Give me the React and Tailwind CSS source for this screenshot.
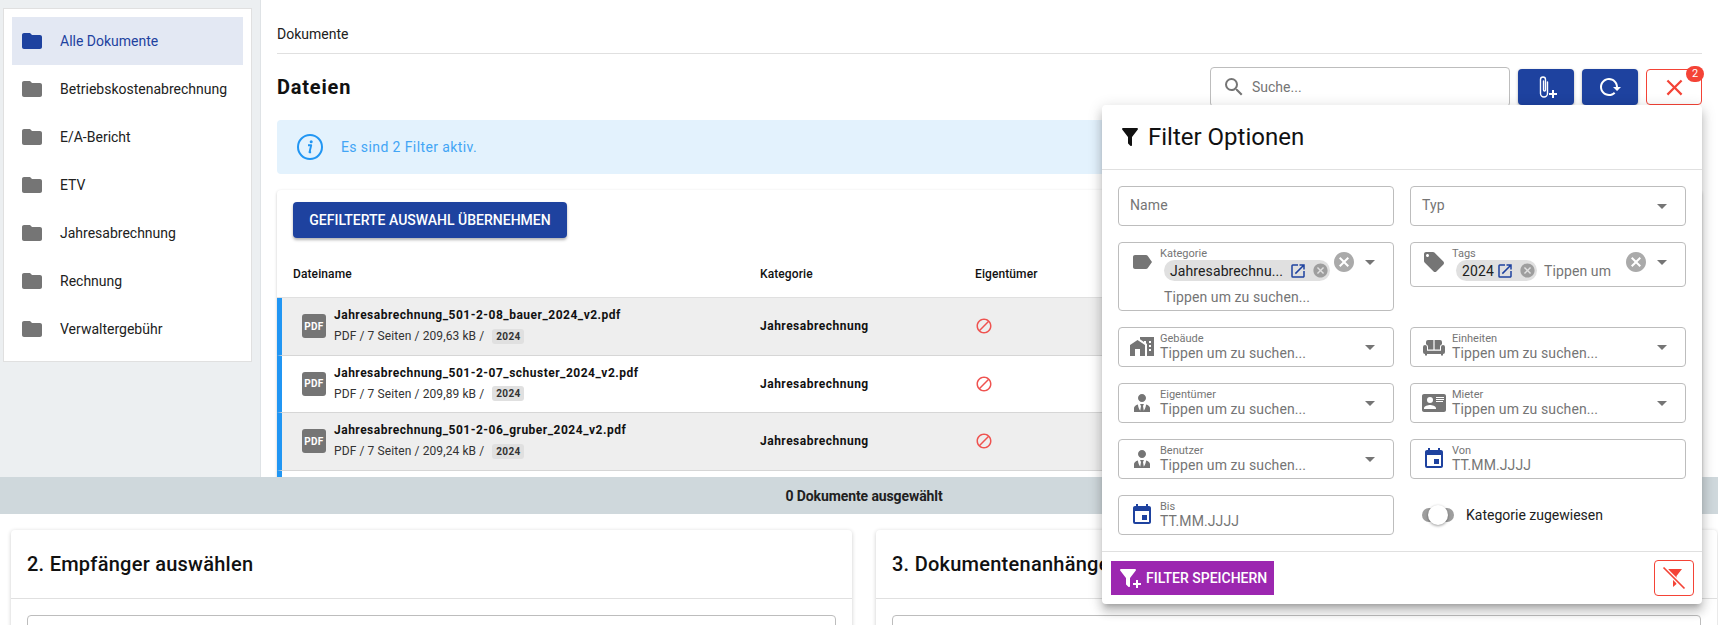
import React from "react";
import {
  MdFolder, MdSearch, MdClose, MdBlock, MdCancel, MdArrowDropDown, MdLabel, MdLocalOffer,
  MdEvent, MdOpenInNew,
} from "react-icons/md";

const P = ({ d, size = 24, className = "" }) => (
  <svg width={size} height={size} viewBox="0 0 24 24" fill="currentColor" className={`shrink-0 ${className}`}>
    <path d={d} />
  </svg>
);

const HOME_CITY = "M0,21V10L7.5,5L15,10V21H10V14H5V21H0M24,2V21H17V8.93L16,8.27V6H14V6.93L10,4.27V2H24M21,14H19V16H21V14M21,10H19V12H21V10M21,6H19V8H21V6Z";
const ACCOUNT_TIE = "M12 3C14.21 3 16 4.79 16 7S14.21 11 12 11 8 9.21 8 7 9.79 3 12 3M16 13.54C16 14.6 15.72 17.07 13.81 19.83L13 15L13.94 13.12C13.32 13.05 12.67 13 12 13S10.68 13.05 10.06 13.12L11 15L10.19 19.83C8.28 17.07 8 14.6 8 13.54C5.61 14.24 4 15.5 4 17V21H20V17C20 15.5 18.4 14.24 16 13.54Z";
const CARD_DETAILS = "M2,3H22C23.05,3 24,3.95 24,5V19C24,20.05 23.05,21 22,21H2C0.95,21 0,20.05 0,19V5C0,3.95 0.95,3 2,3M14,6V7H22V6H14M14,8V9H21.5L22,9V8H14M14,10V11H21V10H14M8,13.91C6,13.91 2,15 2,17V18H14V17C14,15 10,13.91 8,13.91M8,6A3,3 0 0,0 5,9A3,3 0 0,0 8,12A3,3 0 0,0 11,9A3,3 0 0,0 8,6Z";
const RELOAD = "M2 12C2 16.97 6.03 21 11 21C13.39 21 15.68 20.06 17.4 18.4L15.9 16.9C14.63 18.25 12.86 19 11 19C4.76 19 1.64 11.46 6.05 7.05C10.46 2.64 18 5.77 18 12H15L19 16H19.1L23 12H20C20 7.03 15.97 3 11 3C6.03 3 2 7.03 2 12Z";
const FILTER = "M14,12V19.88C14.04,20.18 13.94,20.5 13.71,20.71C13.32,21.1 12.69,21.1 12.3,20.71L10.29,18.7C10.06,18.47 9.96,18.16 10,17.87V12H9.97L4.21,4.62C3.87,4.19 3.95,3.56 4.38,3.22C4.57,3.08 4.78,3 5,3V3H19V3C19.22,3 19.43,3.08 19.62,3.22C20.05,3.56 20.13,4.19 19.79,4.62L14.03,12H14Z";
const FILTER_PLUS = "M12 12V19.88C12.04 20.18 11.94 20.5 11.72 20.71C11.32 21.1 10.69 21.1 10.3 20.71L8.29 18.7C8.06 18.47 7.96 18.16 8 17.88V12H7.97L2.21 4.62C1.87 4.19 1.95 3.56 2.38 3.22C2.57 3.08 2.78 3 3 3H17C17.22 3 17.43 3.08 17.62 3.22C18.05 3.56 18.13 4.19 17.79 4.62L12.03 12H12M15 17H18V14H20V17H23V19H20V22H18V19H15V17Z";
const SOFA = "M4 7a2 2 0 0 1 2-2h5.4v9.5H6V12c0-1.3-.8-2.4-2-2.8zM20 7a2 2 0 0 0-2-2h-5.4v9.5H18V12c0-1.3.8-2.4 2-2.8zM1 12a2 2 0 0 1 4 0v3.7h14V12a2 2 0 0 1 4 0v5a2 2 0 0 1-2 2v1.5h-2V19H5v1.5H3V19a2 2 0 0 1-2-2z";

const folders = ["Alle Dokumente", "Betriebskostenabrechnung", "E/A-Bericht", "ETV", "Jahresabrechnung", "Rechnung", "Verwaltergebühr"];
const files = [
  { name: "Jahresabrechnung_501-2-08_bauer_2024_v2.pdf", size: "209,63 kB", grey: true },
  { name: "Jahresabrechnung_501-2-07_schuster_2024_v2.pdf", size: "209,89 kB", grey: false },
  { name: "Jahresabrechnung_501-2-06_gruber_2024_v2.pdf", size: "209,24 kB", grey: true },
];

const Chevron = () => <MdArrowDropDown size={24} className="shrink-0 text-[#757575]" />;

function Field({ icon, label, value = "Tippen um zu suchen...", chevron = true }) {
  return (
    <div className="flex h-10 items-center rounded border border-[#bdbdbd] bg-white pl-[11px] pr-[11px]">
      <div className="flex w-6 shrink-0 justify-center text-[#757575]">{icon}</div>
      <div className="ml-1.5 flex-1">
        <div className="text-[11px] leading-[13px] text-[#757575]">{label}</div>
        <div className="text-sm leading-4 tracking-[0.1px] text-[#757575]">{value}</div>
      </div>
      {chevron && <Chevron />}
    </div>
  );
}

function Chip({ text, widthClass }) {
  return (
    <div className={`ml-1 flex h-[21px] items-center rounded-full bg-[#e0e0e0] pl-1.5 pr-[1.5px] ${widthClass}`}>
      <span className="flex-1 whitespace-nowrap text-sm leading-4 tracking-[0.1px] text-[#212121]">{text}</span>
      <MdOpenInNew size={18} className="shrink-0 text-[#1e429f]" />
      <MdCancel size={17} className="ml-[4.5px] shrink-0 text-[#9e9e9e]" />
    </div>
  );
}

function FileRow({ file }) {
  return (
    <div className={`flex h-[57.6px] items-center border-b border-l-[5px] border-b-[#d6d6d6] border-l-[#2196f3] ${file.grey ? "bg-[#eeeeee]" : "bg-white"}`}>
      <div className="flex w-[478px] shrink-0 items-center pl-5">
        <div className="flex h-6 w-6 shrink-0 items-center justify-center rounded-[3px] bg-[#757575] text-[10px] font-bold tracking-[0.3px] text-white">PDF</div>
        <div className="ml-2 -mt-0.5">
          <div className="text-xs font-bold leading-[18px] tracking-[0.5px] text-[#111]">{file.name}</div>
          <div className="mt-1 flex items-center text-xs leading-4 tracking-[0.1px] text-[#333]">
            <span>PDF / 7 Seiten / {file.size} /</span>
            <span className="ml-2 rounded-[3px] bg-[#e0e0e0] px-1 text-[10px] font-bold leading-[15px] tracking-[0.3px] text-[#333]">2024</span>
          </div>
        </div>
      </div>
      <div className="w-[215px] shrink-0 text-xs font-bold tracking-[0.5px] text-[#111]">Jahresabrechnung</div>
      <MdBlock size={18} className="text-[#ef5350]" />
    </div>
  );
}

function BottomCard({ title }) {
  return (
    <div className="h-[200px] flex-1 rounded bg-white shadow-[0_1px_4px_rgba(0,0,0,0.2)]">
      <div className="flex h-[69px] items-center border-b border-[#e0e0e0] px-4 text-xl font-medium tracking-[0.25px] text-[#111]">{title}</div>
      <div className="p-4">
        <div className="h-14 rounded border border-[#bdbdbd]" />
      </div>
    </div>
  );
}

export default function App() {
  return (
    <div className="relative h-[625px] w-[1718px] overflow-hidden bg-white [font-family:Roboto,sans-serif]">
      <div className="flex h-[477px]">
        <aside className="w-[261px] shrink-0 border-r border-[#dfe3e6] bg-[#eceff1] pl-[3px] pt-2">
          <div className="w-[249px] border border-[#e0e0e0] bg-white p-2">
            {folders.map((f, i) => (
              <div key={f} className={`flex h-12 items-center pl-2 ${i === 0 ? "bg-[#e3e8f3] text-[#1e429f]" : "text-[#212121]"}`}>
                <MdFolder size={24} className={i === 0 ? "text-[#1e429f]" : "text-[#757575]"} />
                <span className="ml-[16px] text-sm">{f}</span>
              </div>
            ))}
          </div>
        </aside>

        <main className="min-w-0 flex-1 overflow-hidden bg-white px-4">
          <div className="h-[54px] border-b border-[#e0e0e0] pt-[25px] text-sm leading-[18px] text-[#212121]">Dokumente</div>
          <div className="mt-[13px] flex h-10 items-center justify-between">
            <h1 className="text-xl font-bold tracking-[0.8px] text-[#111]">Dateien</h1>
            <div className="flex items-center gap-2">
              <div className="flex h-10 w-[300px] items-center rounded border border-[#bdbdbd] pl-[11px] text-sm text-[#757575]">
                <MdSearch size={24} className="text-[#757575]" />
                <span className="ml-[6px]">Suche...</span>
              </div>
              <button className="flex h-9 w-14 items-center justify-center rounded bg-[#1e429f] text-white shadow-[0_1px_3px_rgba(0,0,0,0.3)]">
                <svg width="24" height="24" viewBox="0 0 24 24" fill="none" stroke="currentColor" strokeWidth="1.4" strokeLinecap="round">
                  <path d="M13.5 7V18.5a3.5 3.5 0 0 1-7 0V4.5a2.5 2.5 0 0 1 5 0V15a1 1 0 0 1-2 0V6" />
                  <path d="M19 15v8M15 19h8" strokeWidth="2" strokeLinecap="butt" />
                </svg>
              </button>
              <button className="flex h-9 w-14 items-center justify-center rounded bg-[#1e429f] text-white shadow-[0_1px_3px_rgba(0,0,0,0.3)]">
                <P d={RELOAD} />
              </button>
              <button className="relative flex h-9 w-14 items-center justify-center rounded border border-[#f44336] text-[#f44336]">
                <MdClose size={27} />
                <span className="absolute -top-[4px] -right-[3px] flex h-4 w-[18px] items-center justify-center rounded-full bg-[#f44336] text-[11px] text-white">2</span>
              </button>
            </div>
          </div>

          <div className="mt-[13px] flex h-[54px] items-center rounded bg-[#e3f2fd] pl-5 text-[#2196f3]">
            <svg width="26" height="26" viewBox="0 0 26 26" fill="none" className="shrink-0">
              <circle cx="13" cy="13" r="12" stroke="currentColor" strokeWidth="2" />
              <circle cx="14.2" cy="7.7" r="1.5" fill="currentColor" />
              <path d="M11 11.3h3.2l-1.7 7h1.6" stroke="currentColor" strokeWidth="1.9" strokeLinejoin="round" />
            </svg>
            <span className="ml-[18px] text-sm tracking-[0.4px] text-[#42a5f5]">Es sind 2 Filter aktiv.</span>
          </div>

          <div className="mt-4 rounded bg-white shadow-[0_1px_3px_rgba(0,0,0,0.22)]">
            <div className="px-4 pt-3">
              <button className="flex h-9 w-[274px] items-center justify-center rounded bg-[#1e429f] text-sm font-medium text-white shadow-[0_2px_3px_rgba(0,0,0,0.3)]">GEFILTERTE AUSWAHL ÜBERNEHMEN</button>
            </div>
            <div className="flex h-[60px] items-center border-b border-[#e0e0e0] pl-4 pt-[12px] text-xs font-medium tracking-[0.1px] text-[#111]">
              <div className="w-[467px] shrink-0">Dateiname</div>
              <div className="w-[215px] shrink-0">Kategorie</div>
              <div>Eigentümer</div>
            </div>
            {files.map((f) => <FileRow key={f.name} file={f} />)}
            <div className="h-[20px] border-l-[5px] border-l-[#2196f3] bg-white" />
          </div>
        </main>
      </div>

      <div className="flex h-[37px] items-center justify-center bg-[#cfd8dc] pl-[10px] text-sm font-bold tracking-[-0.1px] text-[#212121]">0 Dokumente ausgewählt</div>

      <div className="flex gap-6 pl-[11px] pr-px pt-4">
        <BottomCard title="2. Empfänger auswählen" />
        <BottomCard title="3. Dokumentenanhänge auswählen" />
      </div>

      <div className="absolute left-[1102px] top-[105px] w-[600px] rounded bg-white shadow-[0_5px_5px_-3px_rgba(0,0,0,0.2),0_8px_10px_1px_rgba(0,0,0,0.14),0_3px_14px_2px_rgba(0,0,0,0.12)]">
        <div className="flex h-[65px] items-center border-b border-[#e0e0e0] pl-4 text-[#111]">
          <P d={FILTER} />
          <span className="ml-1.5 text-2xl">Filter Optionen</span>
        </div>
        <div className="grid grid-cols-2 items-start gap-4 p-4">
          <div className="flex h-10 items-center rounded border border-[#bdbdbd] pb-[2px] pl-[11px] text-sm tracking-[0.1px] text-[#757575]">Name</div>
          <div className="flex h-10 items-center justify-between rounded border border-[#bdbdbd] pl-[11px] pr-[11px] text-sm tracking-[0.1px] text-[#757575]">
            <span className="-mt-[2px]">Typ</span>
            <Chevron />
          </div>

          <div className="flex h-[68.6px] items-start rounded border border-[#bdbdbd] pl-[11px] pr-[11px] pt-1">
            <MdLabel size={24} className="mt-[3px] shrink-0 text-[#757575]" />
            <div className="ml-1.5 flex-1">
              <div className="text-[11px] leading-[13px] text-[#757575]">Kategorie</div>
              <Chip text="Jahresabrechnu..." widthClass="w-[166px]" />
              <div className="ml-1 mt-2 text-sm leading-4 tracking-[0.1px] text-[#757575]">Tippen um zu suchen...</div>
            </div>
            <MdCancel size={24} className="mt-[3px] shrink-0 text-[#aaaaaa]" />
            <div className="mt-[3px] ml-[2px]"><Chevron /></div>
          </div>

          <div className="flex h-[44.6px] items-start rounded border border-[#bdbdbd] pl-[11px] pr-[11px] pt-1">
            <MdLocalOffer size={24} className="mt-[3px] shrink-0 text-[#757575]" />
            <div className="ml-1.5 flex-1">
              <div className="text-[11px] leading-[13px] text-[#757575]">Tags</div>
              <div className="flex items-center">
                <Chip text="2024" widthClass="w-[81px]" />
                <span className="ml-[7px] text-sm leading-4 tracking-[0.1px] text-[#757575]">Tippen um</span>
              </div>
            </div>
            <MdCancel size={24} className="mt-[3px] shrink-0 text-[#aaaaaa]" />
            <div className="mt-[3px] ml-[2px]"><Chevron /></div>
          </div>

          <Field label="Gebäude" icon={<P d={HOME_CITY} />} />
          <Field label="Einheiten" icon={<P d={SOFA} />} />
          <Field label="Eigentümer" icon={<P d={ACCOUNT_TIE} />} />
          <Field label="Mieter" icon={<P d={CARD_DETAILS} />} />
          <Field label="Benutzer" icon={<P d={ACCOUNT_TIE} />} />
          <Field label="Von" value="TT.MM.JJJJ" chevron={false} icon={<MdEvent size={24} className="text-[#1e429f]" />} />
          <Field label="Bis" value="TT.MM.JJJJ" chevron={false} icon={<MdEvent size={24} className="text-[#1e429f]" />} />

          <div className="flex h-10 items-center pl-3">
            <div className="relative h-[14px] w-8 rounded-full bg-[#9e9e9e]">
              <div className="absolute -top-[3px] left-1.5 h-5 w-5 rounded-full bg-white shadow-[0_1px_3px_rgba(0,0,0,0.4)]" />
            </div>
            <span className="ml-3 text-sm text-[#212121]">Kategorie zugewiesen</span>
          </div>
        </div>
        <div className="flex h-[53px] items-center justify-between border-t border-[#e0e0e0] pl-[9px] pr-2">
          <button className="flex h-[34px] w-[163px] items-center bg-[#9c27b0] pl-[7px] text-sm font-medium text-white">
            <P d={FILTER_PLUS} />
            <span className="ml-1">FILTER SPEICHERN</span>
          </button>
          <button className="flex h-9 w-10 items-center justify-center rounded border border-[#f44336] text-[#f44336]">
            <svg width="24" height="24" viewBox="0 0 24 24">
              <path d="M6 3H20L14.5 10V18L11 21V10Z" fill="currentColor" />
              <path d="M2 2L22 22" stroke="#fff" strokeWidth="4" />
              <path d="M1.5 1.5L22.5 22.5" stroke="currentColor" strokeWidth="1.7" />
            </svg>
          </button>
        </div>
      </div>
    </div>
  );
}
